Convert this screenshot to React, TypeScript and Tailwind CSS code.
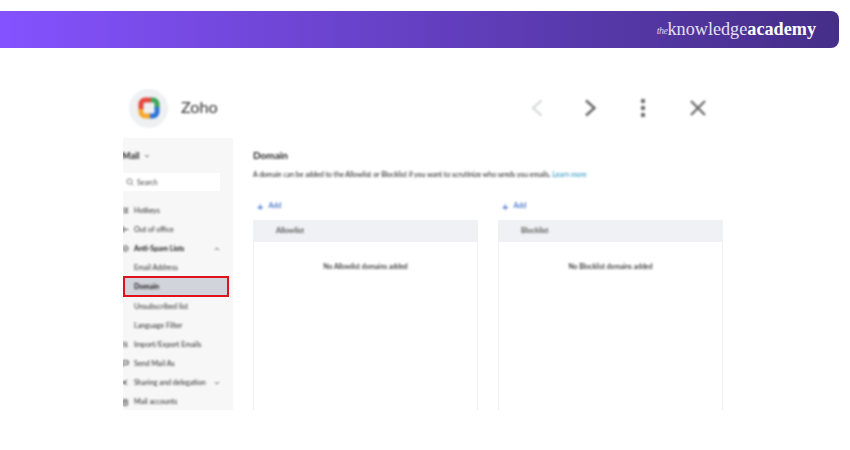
import React from "react";

function Row({ icon, label, bold, right }: { icon?: React.ReactNode; label: string; bold?: boolean; right?: React.ReactNode }) {
  return (
    <div className={`h-[19.2px] flex items-center text-[7.2px] leading-none ${bold ? "font-bold text-[#111]" : "text-[#2a2a2a]"}`}>
      <div className="w-[11px] flex items-center">{icon}</div>
      <span>{label}</span>
      {right && <div className="ml-auto mr-[13px]">{right}</div>}
    </div>
  );
}

const Small = ({ d }: { d: string }) => (
  <svg width="7" height="7" viewBox="0 0 8 8" fill="none" stroke="#333" strokeWidth="1.1" className="-ml-[1px]"><path d={d} /></svg>
);

const Caret = ({ up }: { up?: boolean }) => (
  <svg width="6" height="4" viewBox="0 0 6 4" fill="none" stroke="#555" strokeWidth="0.9"><path d={up ? "M1 3l2-2 2 2" : "M1 1l2 2 2-2"} /></svg>
);

function Panel({ kind }: { kind: string }) {
  return (
    <div className="w-[225px]">
      <div className="h-[12px] flex items-center gap-[5px] pl-[4px] text-[7.2px] text-[#1f55c0] blur-[0.8px]">
        <span className="text-[11px] leading-none">+</span><span>Add</span>
      </div>
      <div className="mt-[8px] h-[200px] rounded-t-[2px] border-x border-[#f1f1f4] bg-white">
        <div className="h-[22px] -mx-px rounded-t-[2px] bg-[#f0f1f4] flex items-center pl-[23px] text-[7.2px] font-bold text-[#555]">
          <span className="blur-[0.8px]">{kind}</span>
        </div>
        <div className="mt-[19px] text-center text-[6.9px] font-medium text-[#111] blur-[0.8px]">No {kind} domains added</div>
      </div>
    </div>
  );
}

export default function App() {
  return (
    <div className="w-[850px] h-[450px] bg-white overflow-hidden pt-[11px] font-['Lato','Noto_Sans',sans-serif]">
      <div className="w-[839px] h-[37px] rounded-r-[8px] bg-gradient-to-r from-[#8552ff] to-[#452e88] flex items-center justify-end pr-[23px] text-white font-['Liberation_Serif',serif]">
        <span className="italic text-[10px] text-[#d9cff0] tracking-[-0.5px] mt-[1px]">the</span>
        <span className="text-[18.2px] text-[#e6e0f4] font-light leading-none">knowledge</span>
        <span className="text-[18.2px] font-bold leading-none">academy</span>
      </div>

      <div className="ml-[123px] w-[600px]">
        <div className="mt-[40px] h-[40px] flex items-center blur-[0.8px]">
          <div className="ml-[6px] w-[39px] h-[39px] rounded-full bg-[#eef0f2] flex items-center justify-center">
            <svg width="22" height="22" viewBox="0 0 22 22" fill="none" strokeWidth="5">
              <path d="M3 12V7a4 4 0 0 1 4-4h6" stroke="#e8483f" />
              <path d="M13 3h2a4 4 0 0 1 4 4v4" stroke="#3aa757" />
              <path d="M19 10v5a4 4 0 0 1-4 4h-4" stroke="#2f74d9" />
              <path d="M12 19H7a4 4 0 0 1-4-4v-3" stroke="#f5a82e" />
            </svg>
          </div>
          <span className="ml-[13px] mb-[1px] text-[16.2px] text-[#333]">Zoho</span>
          <div className="ml-auto flex items-center">
            <svg width="14" height="20" viewBox="0 0 14 20" fill="none" stroke="#d2d4d6" strokeWidth="2"><path d="M11.5 2.5L3 10l8.5 7.5" /></svg>
            <svg width="14" height="20" viewBox="0 0 14 20" fill="none" stroke="#666" strokeWidth="2.4" className="ml-[39px]"><path d="M3 2.5L11.5 10 3 17.5" /></svg>
            <svg width="6" height="20" viewBox="0 0 6 20" fill="#666" className="ml-[43px]"><circle cx="3" cy="3" r="2.2" /><circle cx="3" cy="10" r="2.2" /><circle cx="3" cy="17" r="2.2" /></svg>
            <svg width="18" height="18" viewBox="0 0 18 18" fill="none" stroke="#666" strokeWidth="2.2" className="ml-[43px] mr-[16px]"><path d="M2 2l14 14M16 2L2 16" /></svg>
          </div>
        </div>

        <div className="mt-[10px] h-[272px] flex overflow-hidden">
          <aside className="w-[110px] bg-[#f7f7f7] shrink-0 relative">
            <div className="h-[35px] flex items-center gap-[5px] text-[9px] font-bold text-[#222] blur-[0.8px]">
              <span className="-ml-px">Mail</span><Caret />
            </div>
            <div className="h-[18px] w-[97px] bg-white flex items-center gap-[3px] pl-[3px] text-[7px] text-[#444]">
              <svg width="8" height="8" viewBox="0 0 8 8" fill="none" stroke="#444" strokeWidth="0.7" className="blur-[0.8px]"><circle cx="3.5" cy="3.5" r="2.6" /><path d="M5.5 5.5L7.5 7.5" /></svg>
              <span className="blur-[0.8px]">Search</span>
            </div>
            <div className="mt-[9.6px] blur-[0.8px]">
              <Row icon={<Small d="M1 1.5h2M1 4h2M1 6.5h2M5 1v6M4 2h3M4 6h3" />} label="Hotkeys" />
              <Row icon={<Small d="M1 1v6M1 1l3 3-3 3M4 4h3" />} label="Out of office" />
              <Row icon={<Small d="M4 1a3 3 0 1 0 .01 0M2.5 4l1 1 2-2" />} label="Anti-Spam Lists" bold right={<Caret up />} />
              <Row label="Email Address" />
              <Row label="Domain" />
              <Row label="Unsubscribed list" />
              <Row label="Language Filter" />
              <Row icon={<Small d="M2 1v6M1 2l1-1M5 1v6M5 7l1-1" />} label="Import/Export Emails" />
              <Row icon={<Small d="M1 1h6v4H3L1 7z" />} label="Send Mail As" />
              <Row icon={<Small d="M2 4l4-2.5M2 4l4 2.5M2 3a1 1 0 1 0 .01 0" />} label="Sharing and delegation" right={<Caret />} />
              <Row icon={<Small d="M1 1h5v6H1zM3 3h1v1H3z" />} label="Mail accounts" />
            </div>
            <div className="absolute left-0 top-[138px] w-[106px] h-[21px] bg-[#d2d4db] border-2 border-[#e0121c] flex items-center pl-[9px] pt-[1px] text-[7.2px] font-bold text-[#111]">
              <span className="blur-[0.8px]">Domain</span>
            </div>
          </aside>
          <main className="flex-1 pl-[20px]">
            <div className="mt-[11px] text-[10px] leading-[12px] font-bold text-[#222] blur-[0.8px]">Domain</div>
            <div className="mt-[7px] text-[6.93px] leading-[12px] text-[#111] whitespace-nowrap blur-[0.8px]">
              A domain can be added to the Allowlist or Blocklist if you want to scrutinize who sends you emails. <span className="text-[#1f8fc0]">Learn more</span>
            </div>
            <div className="mt-[20px] flex justify-between">
              <Panel kind="Allowlist" />
              <Panel kind="Blocklist" />
            </div>
          </main>
        </div>
      </div>
    </div>
  );
}
